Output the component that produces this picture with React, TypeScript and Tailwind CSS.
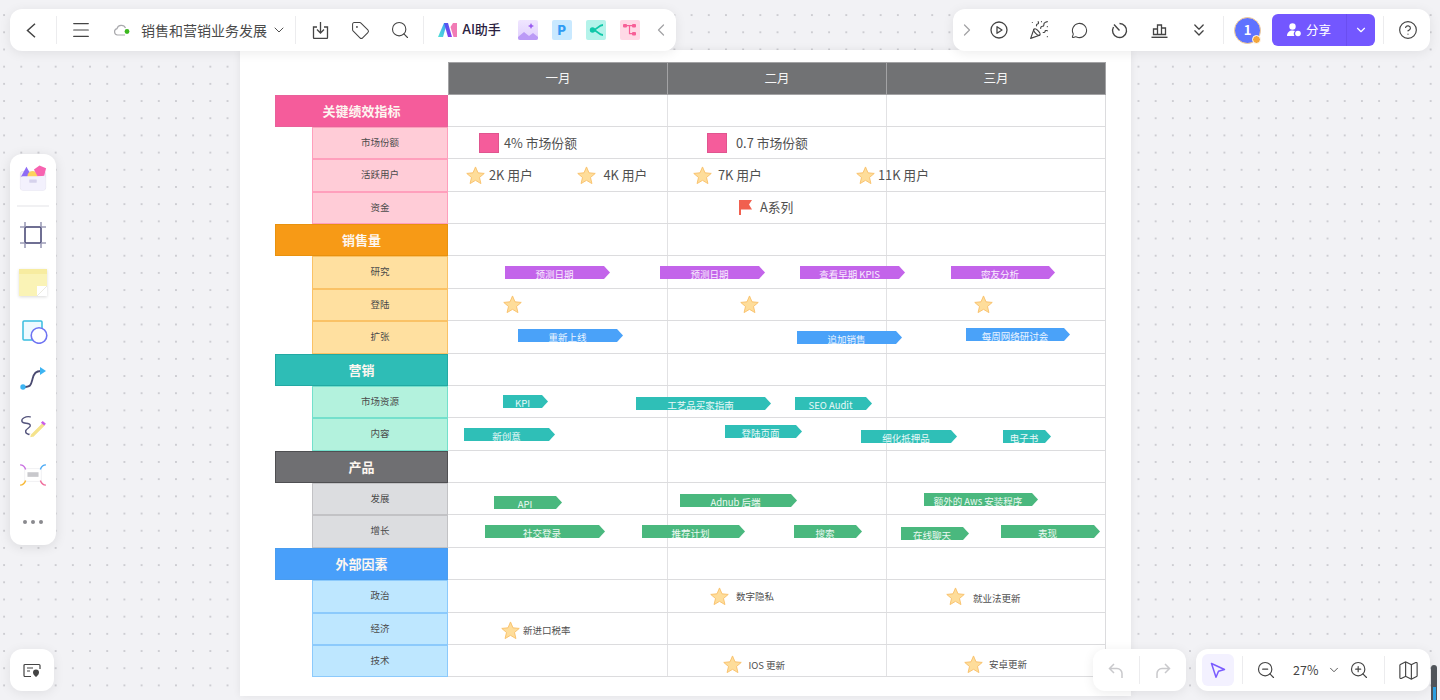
import { ChevronDown, ChevronLeft, ChevronRight, ChevronsDown, CircleHelp, Map as MapIcon, Menu, MessageCircle, PartyPopper, Search, Tag, ZoomIn, ZoomOut } from 'lucide-react';

type Row = { label: string; kind: 'head' | 'child'; cell: string };

const pink = 'bg-[#ffccd7] border-[#ff9fbc]';
const orange = 'bg-[#ffe0a0] border-[#fac266]';
const teal = 'bg-[#b3f2dd] border-[#74e0cc]';
const grey = 'bg-[#dcdde0] border-[#c2c2c5]';
const blue = 'bg-[#bee7ff] border-[#8ccafc]';

const rows: Row[] = [
  { label: '关键绩效指标', kind: 'head', cell: 'bg-[#f55c9b] border-[#e8619a]' },
  { label: '市场份额', kind: 'child', cell: pink },
  { label: '活跃用户', kind: 'child', cell: pink },
  { label: '资金', kind: 'child', cell: pink },
  { label: '销售量', kind: 'head', cell: 'bg-[#f79a16] border-[#e8920f]' },
  { label: '研究', kind: 'child', cell: orange },
  { label: '登陆', kind: 'child', cell: orange },
  { label: '扩张', kind: 'child', cell: orange },
  { label: '营销', kind: 'head', cell: 'bg-[#2ebdb6] border-[#23a9a3]' },
  { label: '市场资源', kind: 'child', cell: teal },
  { label: '内容', kind: 'child', cell: teal },
  { label: '产品', kind: 'head', cell: 'bg-[#6f6f72] border-[#4f4f52]' },
  { label: '发展', kind: 'child', cell: grey },
  { label: '增长', kind: 'child', cell: grey },
  { label: '外部因素', kind: 'head', cell: 'bg-[#489ffa] border-[#4a9df0]' },
  { label: '政治', kind: 'child', cell: blue },
  { label: '经济', kind: 'child', cell: blue },
  { label: '技术', kind: 'child', cell: blue },
];

const purpleBar = 'bg-[#c364ea]';
const blueBar = 'bg-[#4aa2f9]';
const tealBar = 'bg-[#2fbfb7]';
const greenBar = 'bg-[#4ab87e]';

// x, y, width are in screenshot pixels
const bars: [string, number, number, number, string][] = [
  ['预测日期', 505, 266, 105, purpleBar],
  ['预测日期', 660, 266, 105, purpleBar],
  ['查看早期 KPIS', 800, 266, 105, purpleBar],
  ['密友分析', 951, 266, 104, purpleBar],
  ['重新上线', 518, 329, 105, blueBar],
  ['追加销售', 797, 331, 105, blueBar],
  ['每周网络研讨会', 966, 328, 104, blueBar],
  ['KPI', 503, 395, 45, tealBar],
  ['工艺品买家指南', 636, 397, 135, tealBar],
  ['SEO Audit', 795, 397, 77, tealBar],
  ['新创意', 464, 428, 91, tealBar],
  ['登陆页面', 725, 425, 77, tealBar],
  ['细化抵押品', 861, 430, 96, tealBar],
  ['电子书', 1003, 430, 48, tealBar],
  ['API', 494, 496, 68, greenBar],
  ['Adnub 后端', 680, 494, 117, greenBar],
  ['额外的 Aws 安装程序', 924, 493, 114, greenBar],
  ['社交登录', 485, 525, 120, greenBar],
  ['推荐计划', 642, 525, 103, greenBar],
  ['搜索', 794, 525, 68, greenBar],
  ['在线聊天', 901, 527, 68, greenBar],
  ['表现', 1001, 525, 99, greenBar],
];

const stars: [number, number][] = [
  [466, 166], [577, 166], [693, 166], [856, 166],
  [503, 295], [740, 295], [974, 295],
  [710, 587], [946, 587], [501, 621], [723, 655], [964, 655],
];

// text notes beside the markers: x, centre y, text, size class
const notes: [number, number, string, string][] = [
  [504, 142.5, '4% 市场份额', 'text-[12.8px]'],
  [736, 142.5, '0.7 市场份额', 'text-[12.8px]'],
  [489, 175, '2K 用户', 'text-[12.8px]'],
  [603.5, 175, '4K 用户', 'text-[12.8px]'],
  [718, 175, '7K 用户', 'text-[12.8px]'],
  [878, 175, '11K 用户', 'text-[12.8px]'],
  [760, 207, 'A系列', 'text-[12.8px]'],
  [736, 596, '数字隐私', 'text-[9.5px]'],
  [973, 597.5, '就业法更新', 'text-[9.5px]'],
  [523, 630, '新进口税率', 'text-[9.5px]'],
  [748.5, 665, 'IOS 更新', 'text-[9.5px]'],
  [989, 664, '安卓更新', 'text-[9.5px]'],
];

const toX = (x: number) => x - 275;
const toY = (y: number) => y - 94.5;

function Star() {
  return (
    <svg width="19" height="19" viewBox="0 0 20 20">
      <path d="M10 1l2.6 6.200 6.600.6-5 4.300 1.500 6.400L10 15.100l-5.700 3.400 1.500-6.400-5-4.300 6.600-.6z" fill="#fedd9a" stroke="#f9c16c" strokeWidth="1" strokeLinejoin="round" />
    </svg>
  );
}

function Divider() {
  return <div className="h-7 w-px bg-[#ececee]" />;
}

function TemplateIcon() {
  return (
    <svg width="28" height="28" viewBox="0 0 30 30">
      <rect x="1.500" y="8" width="27" height="20" rx="2.500" fill="#f1effb" stroke="#e4e2ee" />
      <path d="M2 14l6-11 6 11z" fill="#8f6cf5" />
      <circle cx="14.500" cy="13" r="5.500" fill="#fdd25c" />
      <path d="M16 6l6-4.500 7 3-2 8-7 1z" fill="#f763b0" />
      <rect x="1.500" y="13" width="27" height="15" rx="2.500" fill="#f3f1fd" />
      <rect x="11" y="16.500" width="8" height="3.500" rx="0.500" fill="#d6d2ec" />
    </svg>
  );
}

function FrameIcon() {
  return (
    <svg width="26" height="26" viewBox="0 0 26 26" fill="none">
      <rect x="5" y="5" width="16" height="16" stroke="#4c4c78" strokeWidth="1.600" />
      <path d="M0 5h5M21 5h5M0 21h5M21 21h5M5 0v5M21 0v5M5 21v5M21 21v5" stroke="#9d9db8" strokeWidth="1.600" />
    </svg>
  );
}

function StickyIcon() {
  return (
    <svg width="28" height="27" viewBox="0 0 28 27">
      <path d="M0 0h28v17L18 27H0z" fill="#faf3b6" />
      <rect width="28" height="5" fill="#f7eca0" />
      <path d="M28 17H18v10z" fill="#ffffff" />
      <path d="M28 17L18 27" stroke="#e6e4dc" strokeWidth="0.800" />
    </svg>
  );
}

function ShapeIcon() {
  return (
    <svg width="26" height="24" viewBox="0 0 26 24" fill="none">
      <rect x="1" y="1" width="19" height="19" rx="1" fill="#eefaff" stroke="#38bde0" strokeWidth="1.500" />
      <circle cx="17" cy="15.500" r="7.800" fill="#ffffff" stroke="#6f74f2" strokeWidth="1.600" />
    </svg>
  );
}

function ConnectorIcon() {
  return (
    <svg width="26" height="24" viewBox="0 0 26 24" fill="none">
      <path d="M3 20c8 0 8-2 9.500-8S16 4 21 4" stroke="#4a4a70" strokeWidth="1.800" />
      <circle cx="3" cy="20" r="2.700" fill="#3db4f2" />
      <path d="M20 0l6 4-6 4z" fill="#3db4f2" />
    </svg>
  );
}

function PenIcon() {
  return (
    <svg width="27" height="24" viewBox="0 0 29 26" fill="none">
      <path d="M11 2C6 1 1 4 2 7c1 3 8 1 9 4 1 3-5 3-5 7 0 3 5 4 8 2" stroke="#54547c" strokeWidth="1.500" strokeLinecap="round" />
      <path d="M11 21l13-13 4 3-13 13-5 1z" fill="#f5e38c" stroke="#ffffff" strokeWidth="1.500" />
      <path d="M22.500 8.500l2-2 3.500 3-2 2z" fill="#c95ee8" />
    </svg>
  );
}

function MindIcon() {
  return (
    <svg width="28" height="24" viewBox="0 0 30 26" fill="none">
      <rect x="6" y="6" width="18" height="14" rx="1" fill="#ffffff" stroke="#f0f0f2" />
      <rect x="9" y="10" width="12" height="5" fill="#c8c8cc" />
      <path d="M1 2c4 0 5 2 6 5" stroke="#c86ee0" strokeWidth="1.500" />
      <path d="M29 2c-4 0-5 2-6 5" stroke="#47a8f5" strokeWidth="1.500" />
      <path d="M1 24c4 0 5-2 6-5" stroke="#f7b733" strokeWidth="1.500" />
      <path d="M29 24c-4 0-5-2-6-5" stroke="#ef6a9a" strokeWidth="1.500" />
    </svg>
  );
}

function AiLogo() {
  return (
    <svg width="19" height="14" viewBox="0 0 19 14">
      <defs>
        <linearGradient id="aiA" x1="0" x2="1" y1="1" y2="0">
          <stop offset="0" stopColor="#4fe3d6" />
          <stop offset="1" stopColor="#3f9bf5" />
        </linearGradient>
        <linearGradient id="aiB" x1="0" x2="1" y1="0" y2="1">
          <stop offset="0" stopColor="#4a5cf0" />
          <stop offset="1" stopColor="#8a3cf0" />
        </linearGradient>
      </defs>
      <path d="M0 14L6 0h3L5 14z" fill="url(#aiA)" />
      <path d="M6 0h4l4 14h-4z" fill="url(#aiB)" />
      <path d="M12.500 4L15 0h4v14h-3.500z" fill="#f17bb5" />
    </svg>
  );
}

function ToolTile({ children, className }: { children: React.ReactNode; className: string }) {
  return <div className={`flex h-5 w-5 items-center justify-center overflow-hidden rounded-[2px] ${className}`}>{children}</div>;
}

function TopLeftBar() {
  return (
    <div className="absolute left-[10px] top-[9px] flex h-[42px] w-[666px] items-center rounded-xl bg-white text-[#444] shadow-[0_2px_12px_rgba(0,0,0,0.08)]">
      <div className="flex w-[46px] justify-center pr-[4px]">
        <svg width="10" height="15" viewBox="0 0 10 15" fill="none" stroke="#444" strokeWidth="1.500">
          <path d="M9 .7L1.500 7.500 9 14.300" />
        </svg>
      </div>
      <Divider />
      <div className="flex w-[48px] justify-center"><Menu size={22} strokeWidth={1.200} /></div>
      <svg width="18" height="14" viewBox="0 0 18 14" fill="none" className="ml-[8px]">
        <path d="M12 12H4.500A3.200 3.200 0 0 1 4 5.700 4.500 4.500 0 0 1 12.500 5" stroke="#a9a9ad" strokeWidth="1.200" />
        <circle cx="14" cy="8.500" r="2.400" fill="#3cb81f" />
      </svg>
      <span className="ml-[10px] text-[14px] leading-none text-[#4a4a4a]">销售和营销业务发展</span>
      <ChevronDown size={16} strokeWidth={1.400} className="ml-[4px]" />
      <div className="ml-[8px]"><Divider /></div>
      <div className="flex w-[48px] justify-center">
        <svg width="17" height="17" viewBox="0 0 17 17" fill="none" stroke="#444" strokeWidth="1.300">
          <path d="M5 5H1.500v10.500a1 1 0 0 0 1 1h12a1 1 0 0 0 1-1V5H12" />
          <path d="M8.500 0v10.500M5 7.500l3.500 3.500L12 7.500" />
        </svg>
      </div>
      <div className="flex w-[32px] justify-center"><Tag size={19} strokeWidth={1.300} /></div>
      <div className="flex w-[47px] justify-center"><Search size={20} strokeWidth={1.300} /></div>
      <Divider />
      <div className="ml-[14px]"><AiLogo /></div>
      <span className="ml-[5px] font-['Inter','Noto_Sans_CJK_SC',sans-serif] text-[13px] font-medium text-[#2a2140]">AI助手</span>
      <div className="ml-[17px] flex items-center gap-[14px]">
        <ToolTile className="bg-[linear-gradient(180deg,#f0e6ff,#e0cffd)]">
          <svg width="20" height="20" viewBox="0 0 20 20">
            <path d="M13 3l1 2 2 1-2 1-1 2-1-2-2-1 2-1z" fill="#9a5cf0" />
            <path d="M0 20v-3l6-5 5 4 4-3 5 4v3z" fill="#bb9af6" />
          </svg>
        </ToolTile>
        <ToolTile className="bg-[#c9e9ff]">
          <span className="font-['Inter',sans-serif] text-[13px] font-extrabold leading-none text-[#2f9bf4]">P</span>
        </ToolTile>
        <ToolTile className="bg-[#b4f3ea]">
          <svg width="14" height="12" viewBox="0 0 14 12" fill="none">
            <circle cx="3.500" cy="6" r="2.700" fill="#10c7a8" />
            <path d="M14 1C9 1 9 6 3.500 6 9 6 9 11 14 11" stroke="#10c7a8" strokeWidth="1.800" />
          </svg>
        </ToolTile>
        <ToolTile className="bg-[#ffd9e6]">
          <svg width="14" height="14" viewBox="0 0 14 14" fill="none">
            <rect x="0" y="1" width="4" height="3.500" rx="1" fill="#f75f97" />
            <rect x="9" y="1" width="4" height="3.500" rx="1" fill="#f75f97" />
            <rect x="9" y="9" width="4" height="3.500" rx="1" fill="#f75f97" />
            <path d="M4 2.700h5M6.500 2.700v8h3" stroke="#f75f97" strokeWidth="1.200" />
          </svg>
        </ToolTile>
      </div>
      <ChevronLeft size={20} strokeWidth={1.500} className="ml-[11px] text-[#a3a3a6]" />
    </div>
  );
}

function TopRightBar() {
  return (
    <div className="absolute left-[953px] top-[9px] flex h-[42px] w-[477px] items-center rounded-xl bg-white text-[#444] shadow-[0_2px_12px_rgba(0,0,0,0.08)]">
      <ChevronRight size={20} strokeWidth={1.500} className="ml-[4px] text-[#a3a3a6]" />
      <div className="ml-[2px] flex w-[40px] justify-center">
        <svg width="18" height="18" viewBox="0 0 18 18" fill="none" stroke="#444" strokeWidth="1.300">
          <circle cx="9" cy="9" r="8" />
          <path d="M7 5.700L12 9l-5 3.300z" strokeLinejoin="round" />
        </svg>
      </div>
      <div className="flex w-[40px] justify-center"><PartyPopper size={20} strokeWidth={1.400} /></div>
      <div className="flex w-[40px] justify-center"><MessageCircle size={17} strokeWidth={1.500} /></div>
      <div className="flex w-[40px] justify-center">
        <svg width="17" height="17" viewBox="0 0 17 17" fill="none" stroke="#444" strokeWidth="1.400">
          <path d="M8.500 1.500a7 7 0 1 1-6 3.500" />
          <path d="M3 2.500l5.500 6" />
        </svg>
      </div>
      <div className="flex w-[40px] justify-center">
        <svg width="17" height="15" viewBox="0 0 17 15" fill="none" stroke="#444" strokeWidth="1.300">
          <path d="M2.500 11.500V6h4v5.500zM6.500 11.500V2h4v9.500zM10.500 11.500V5h4v6.500z" />
          <path d="M0.500 14.300h16" strokeWidth="1.400" />
        </svg>
      </div>
      <div className="flex w-[40px] justify-center"><ChevronsDown size={20} strokeWidth={1.600} /></div>
      <div className="ml-[4px]"><Divider /></div>
      <div className="relative ml-[10px] flex h-[27px] w-[27px] items-center justify-center rounded-full border border-[#f9cf90] bg-[#5f73ff] text-[13px] font-semibold text-white">
        1
        <div className="absolute bottom-[-1px] right-[-1px] h-[9px] w-[9px] rounded-full border border-white bg-[#f3a63c]" />
      </div>
      <div className="ml-[11px] flex h-8 w-[103px] items-center rounded-md bg-[#7357ff] text-white">
        <div className="flex w-[74px] items-center justify-center gap-[5px]">
          <svg width="14" height="14" viewBox="0 0 14 14" fill="#fff">
            <circle cx="5.500" cy="3.500" r="3.200" />
            <path d="M0 13c0-3.500 2.500-5.500 5.500-5.500 1 0 1.800.2 2.500.5a4 4 0 0 0-.5 5z" />
            <circle cx="11" cy="10.500" r="2.800" />
          </svg>
          <span className="text-[12.500px]">分享</span>
        </div>
        <div className="h-full w-px bg-[#6a4ef0]" />
        <div className="flex flex-1 justify-center"><ChevronDown size={14} strokeWidth={2} /></div>
      </div>
      <div className="ml-[8px]"><Divider /></div>
      <div className="flex w-[46px] justify-center pl-[2px]"><CircleHelp size={20} strokeWidth={1.400} /></div>
    </div>
  );
}

function LeftBar() {
  return (
    <div className="absolute left-[10px] top-[154px] flex h-[391px] w-[46px] flex-col items-center rounded-xl bg-white shadow-[0_2px_12px_rgba(0,0,0,0.1)]">
      <div className="mt-[10px] flex"><TemplateIcon /></div>
      <div className="mt-[13px] h-[2px] w-8 bg-[#f1f1f3]" />
      <div className="mt-[15px] flex"><FrameIcon /></div>
      <div className="mt-[21px] flex shadow-[0_1px_3px_rgba(0,0,0,0.15)]"><StickyIcon /></div>
      <div className="ml-[3px] mt-[24px] flex"><ShapeIcon /></div>
      <div className="mt-[23px] flex"><ConnectorIcon /></div>
      <div className="mt-[24px] flex"><PenIcon /></div>
      <div className="mt-[24px] flex"><MindIcon /></div>
      <div className="mt-[33px] flex gap-[4px]">
        <div className="h-1 w-1 rounded-full bg-[#8a8a8e]" />
        <div className="h-1 w-1 rounded-full bg-[#8a8a8e]" />
        <div className="h-1 w-1 rounded-full bg-[#8a8a8e]" />
      </div>
    </div>
  );
}

function BottomBars() {
  return (
    <>
      <div className="absolute left-[10px] top-[649px] flex h-[42px] w-[44px] items-center justify-center rounded-xl bg-white shadow-[0_2px_12px_rgba(0,0,0,0.08)]">
        <svg width="18" height="15" viewBox="0 0 18 15" fill="none" stroke="#444" strokeWidth="1.200">
          <path d="M8 13.500H2a1 1 0 0 1-1-1v-10a1 1 0 0 1 1-1h14a1 1 0 0 1 1 1V6" />
          <path d="M4 5h6M4 8h3" />
          <path d="M13 14s-3-2.300-3-4.500a3 3 0 0 1 6 0c0 2.200-3 4.500-3 4.500z" fill="#444" stroke="none" />
        </svg>
      </div>
      <div className="absolute left-[1093px] top-[649px] flex h-[42px] w-[93px] items-center rounded-xl bg-white shadow-[0_2px_12px_rgba(0,0,0,0.08)]">
        <div className="flex w-[46px] justify-center">
          <svg width="16" height="15" viewBox="0 0 16 15" fill="none" stroke="#c9c9cc" strokeWidth="1.500">
            <path d="M6 1L1.500 5.500 6 10M1.500 5.500H9a5 5 0 0 1 5 5V15" />
          </svg>
        </div>
        <Divider />
        <div className="flex flex-1 justify-center">
          <svg width="16" height="15" viewBox="0 0 16 15" fill="none" stroke="#c9c9cc" strokeWidth="1.500">
            <path d="M10 1l4.500 4.500L10 10M14.500 5.500H7a5 5 0 0 0-5 5V15" />
          </svg>
        </div>
      </div>
      <div className="absolute left-[1196px] top-[649px] flex h-[42px] w-[234px] items-center rounded-xl bg-white text-[#444] shadow-[0_2px_12px_rgba(0,0,0,0.08)]">
        <div className="ml-[6px] flex h-8 w-8 items-center justify-center rounded-md bg-[#f3f1ff]">
          <svg width="16" height="17" viewBox="0 0 16 17" fill="none" stroke="#7a5cff" strokeWidth="1.500">
            <path d="M1.500 1.500l13 6-6 1.700-2.500 6z" strokeLinejoin="round" />
          </svg>
        </div>
        <div className="ml-[8px]"><Divider /></div>
        <ZoomOut size={20} strokeWidth={1.400} className="ml-[13px]" />
        <span className="ml-[17px] text-[12.500px]">27%</span>
        <ChevronDown size={14} strokeWidth={1.500} className="ml-[9px]" />
        <ZoomIn size={20} strokeWidth={1.400} className="ml-[8px]" />
        <div className="ml-[15px]"><Divider /></div>
        <MapIcon size={23} strokeWidth={1.200} className="ml-[12px]" />
      </div>
      <div className="absolute left-[1431px] top-[665px] h-[35px] w-[6px] overflow-hidden rounded-t-[3px] bg-[#50545a]">
        <div className="mx-auto mt-[22px] h-[13px] w-[3px] bg-[#2b9fe0]" />
      </div>
    </>
  );
}

function Plan() {
  return (
    <div className="relative">
      {rows.map((row, i) => (
        <div key={i} className="flex h-[32.39px]">
          <div className={row.kind === 'head' ? 'w-[173px]' : 'w-[173px] pl-[37px]'}>
            <div
              className={`flex h-full items-center justify-center border-[1.500px] ${row.cell} ${
                row.kind === 'head' ? 'text-[13px] font-bold text-[#fdf6f0]' : 'pb-[2px] text-[9.500px] text-[#4b4b4b]'
              }`}
            >
              {row.label}
            </div>
          </div>
          <div className="grid w-[658px] grid-cols-[220px_219px_219px] border-b-[1.500px] border-r-[1.500px] border-[#dcdcde]">
            <div className="border-r-[1.500px] border-[#e2e2e4]" />
            <div className="border-r-[1.500px] border-[#e2e2e4]" />
            <div />
          </div>
        </div>
      ))}

      {/* things placed on the plan, coordinates come from the data */}
      {bars.map(([text, x, y, w, color], i) => (
        <div key={i} className="absolute h-[13px]" style={{ left: toX(x), top: toY(y), width: w }}>
          <div className={`absolute inset-0 [clip-path:polygon(0_0,calc(100%-6px)_0,100%_50%,calc(100%-6px)_100%,0_100%)] ${color}`} />
          <div className="relative pr-[6px] pt-[2px] text-center text-[9.500px] leading-[13px] whitespace-nowrap text-white/90">
            {text}
          </div>
        </div>
      ))}
      {stars.map(([x, y], i) => (
        <div key={i} className="absolute" style={{ left: toX(x), top: toY(y) }}>
          <Star />
        </div>
      ))}
      {notes.map(([x, y, text, size], i) => (
        <div
          key={i}
          className={`absolute -translate-y-1/2 whitespace-nowrap text-[#505050] ${size}`}
          style={{ left: toX(x), top: toY(y) }}
        >
          {text}
        </div>
      ))}
      <div className="absolute h-5 w-5 border border-[#e0558f] bg-[#f55c9b]" style={{ left: toX(479), top: toY(133) }} />
      <div className="absolute h-5 w-5 border border-[#e0558f] bg-[#f55c9b]" style={{ left: toX(707), top: toY(133) }} />
      <svg width="15" height="16" viewBox="0 0 15 16" className="absolute" style={{ left: toX(738), top: toY(200) }}>
        <path d="M1 0h13l-3 4.500L14 9.500H3V15H1z" fill="#f1604f" />
      </svg>
    </div>
  );
}

export default function App() {
  return (
    <div className="relative h-[700px] w-[1440px] overflow-hidden bg-[#f2f2f5] bg-[radial-gradient(circle,#cdcdd2_1px,transparent_1.300px)] bg-size-[17.200px_17.200px] bg-position-[-4.500px_6.500px] pl-[240px] pt-[50px] font-['Noto_Sans_CJK_SC','Noto_Sans',sans-serif]">
      <div className="h-[646px] w-[891px] bg-white pl-[35px] pt-[12px] shadow-[0_0_8px_rgba(0,0,0,0.07)]">
        <div className="ml-[173px] flex h-[32.500px] w-[658px] border border-[#a3a3a5] bg-[#717274] text-[12.500px] text-[#f5f5f5]">
          <div className="flex w-[219px] items-center justify-center border-r border-[#a3a3a5]">一月</div>
          <div className="flex w-[219px] items-center justify-center border-r border-[#a3a3a5]">二月</div>
          <div className="flex flex-1 items-center justify-center">三月</div>
        </div>
        <Plan />
      </div>
      <TopLeftBar />
      <TopRightBar />
      <LeftBar />
      <BottomBars />
    </div>
  );
}
